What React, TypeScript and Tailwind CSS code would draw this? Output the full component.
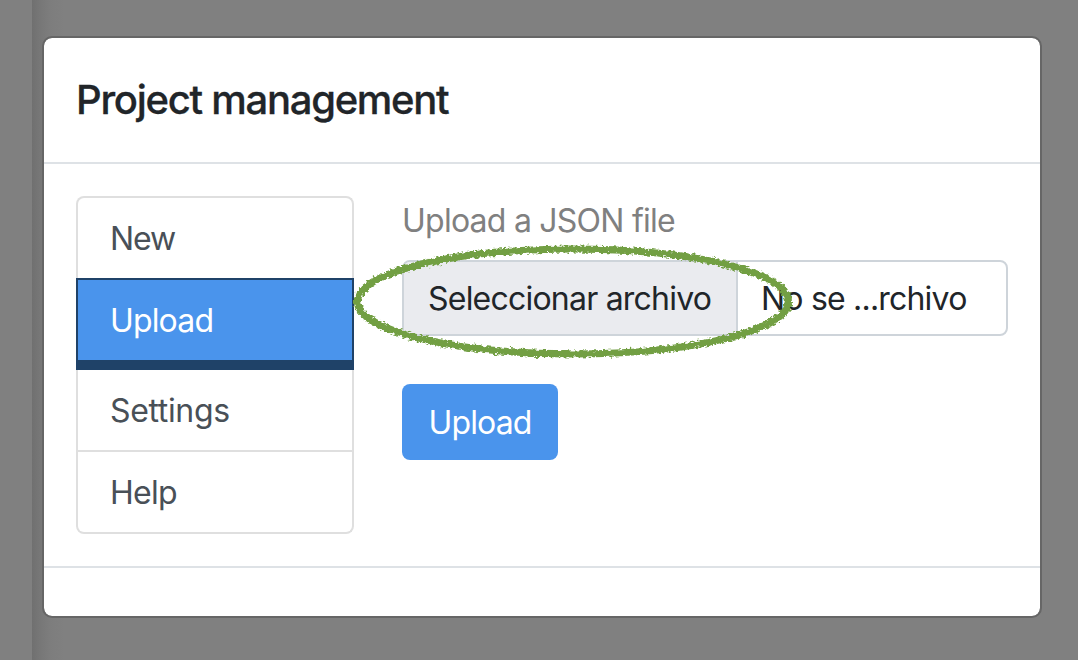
import React from "react";

const item = "flex h-[82px] items-center border-[#dfdfdf] px-8 pt-0.5 text-[32px] text-[#495057]";

function Nav() {
  return (
    <nav className="flex h-[338px] w-[278px] shrink-0 flex-col">
      <a className={`${item} rounded-t-lg border-x-2 border-t-2`}>
        <span className="tracking-[-1.1px]">New</span>
      </a>
      <a className="flex h-[92px] items-center border-2 border-b-[10px] border-[#1f4268] bg-[#4a94ec] px-8 pt-0.5 text-[32px] text-white">
        <span className="tracking-[-0.85px]">Upload</span>
      </a>
      <a className={`${item} border-x-2 border-b-2`}>
        <span className="tracking-[-0.35px]">Settings</span>
      </a>
      <a className={`${item} rounded-b-lg border-x-2 border-b-2`}>
        <span className="tracking-[-0.7px]">Help</span>
      </a>
    </nav>
  );
}

function BrushEllipse() {
  return (
    <svg className="pointer-events-none absolute -left-[64px] -top-[32px]" width="460" height="140" viewBox="340 230 460 140" fill="none">
      <defs>
        <filter id="brush" filterUnits="userSpaceOnUse" x="340" y="230" width="460" height="140" colorInterpolationFilters="sRGB">
          <feTurbulence type="fractalNoise" baseFrequency="0.3 0.4" numOctaves="2" seed="4" result="noise" />
          <feDisplacementMap in="SourceGraphic" in2="noise" scale="6" xChannelSelector="R" yChannelSelector="G" />
        </filter>
      </defs>
      <ellipse cx="573" cy="301.5" rx="215.5" ry="52.5" stroke="#729f43" strokeWidth="7.2" filter="url(#brush)" />
    </svg>
  );
}

export default function App() {
  return (
    <div className="flex h-[660px] w-[1078px] overflow-hidden bg-[#808080] font-[Inter,sans-serif] leading-none">
      <div className="h-full w-8 shrink-0" />
      <div className="h-full flex-1 bg-[linear-gradient(to_right,#707070_0px,#777777_8px,#7d7d7d_18px,#808080_32px)] pl-[10px] pt-9">
        <div className="flex h-[582px] w-[1000px] flex-col rounded-[10px] border-2 border-[#666666] bg-white bg-clip-padding">
          <header className="flex h-[126px] items-center border-b-2 border-[#dee2e6] px-8">
            <h1 className="text-[40px] font-medium tracking-[-1.28px] text-[#212529] [-webkit-text-stroke:0.3px_#212529]">Project management</h1>
          </header>
          <main className="flex h-[404px] gap-12 border-b-2 border-[#dee2e6] p-8">
            <Nav />
            <section className="flex w-[606px] flex-col items-start">
              <p className="flex h-16 items-center pb-[14px] text-[32px] tracking-[-0.76px] text-[#808080]">Upload a JSON file</p>
              <div className="relative flex h-[76px] w-full rounded-lg border-2 border-[#ced4da] text-[32px] text-[#212529]">
                <button className="flex w-[334px] shrink-0 items-center rounded-l-md border-r-2 border-[#ced4da] bg-[#eaebef] pl-6 pt-0.5">
                  <span className="whitespace-nowrap tracking-[-0.78px]">Seleccionar archivo</span>
                </button>
                <span className="flex items-center whitespace-nowrap pl-[23px] pt-0.5 tracking-[-0.8px]">No se ...rchivo</span>
                <BrushEllipse />
              </div>
              <button className="mt-12 flex h-[76px] w-[156px] items-center justify-center rounded-lg bg-[#4a94ec] pt-0.5 text-[32px] tracking-[-0.85px] text-white">
                Upload
              </button>
            </section>
          </main>
        </div>
      </div>
    </div>
  );
}
